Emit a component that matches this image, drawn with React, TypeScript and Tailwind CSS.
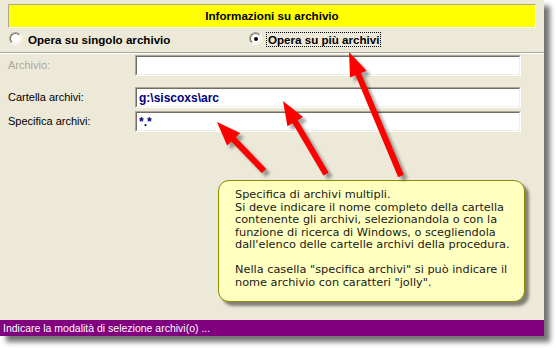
import React from "react";

type P = { x: number; y: number };

function arrowPoly(tip: P, tail: P, headLen = 24, headHalf = 9, shaftHalf = 3): string {
  const dx = tip.x - tail.x;
  const dy = tip.y - tail.y;
  const len = Math.sqrt(dx * dx + dy * dy);
  const ux = dx / len;
  const uy = dy / len;
  const px = -uy;
  const py = ux;
  const bx = tip.x - ux * headLen;
  const by = tip.y - uy * headLen;
  const pts: [number, number][] = [
    [tail.x + px * shaftHalf, tail.y + py * shaftHalf],
    [bx + px * shaftHalf, by + py * shaftHalf],
    [bx + px * headHalf, by + py * headHalf],
    [tip.x, tip.y],
    [bx - px * headHalf, by - py * headHalf],
    [bx - px * shaftHalf, by - py * shaftHalf],
    [tail.x - px * shaftHalf, tail.y - py * shaftHalf],
  ];
  return pts.map((p) => `${p[0].toFixed(1)},${p[1].toFixed(1)}`).join(" ");
}

const arrows: { tip: P; tail: P }[] = [
  { tip: { x: 349, y: 52 }, tail: { x: 401, y: 176 } },
  { tip: { x: 283, y: 101 }, tail: { x: 326, y: 174 } },
  { tip: { x: 217, y: 122 }, tail: { x: 264, y: 171 } },
];

function Radio({ checked }: { checked?: boolean }) {
  return (
    <div className="w-[13px] h-[13px] rounded-full border border-[#ACA899] border-b-white border-r-white shrink-0">
      <div className="w-full h-full rounded-full border border-[#716F64] border-b-[#F1EFE2] border-r-[#F1EFE2] bg-white flex items-center justify-center">
        {checked && <div className="w-[4px] h-[4px] rounded-full bg-black" />}
      </div>
    </div>
  );
}

function Field({ children }: { children?: React.ReactNode }) {
  return (
    <div className="w-[386px] h-[21px] border border-[#ACA899] border-b-white border-r-white">
      <div className="w-full h-full border border-[#716F64] border-b-[#F1EFE2] border-r-[#F1EFE2] bg-white flex items-center pl-[2px] text-[12px] font-bold text-[#000080] leading-none">
        {children}
      </div>
    </div>
  );
}

export default function App() {
  return (
    <div className="w-[556px] h-[348px] bg-white overflow-hidden" style={{ fontFamily: '"Liberation Sans", Arial, sans-serif' }}>
      <div className="relative w-[544px] h-[336px] bg-[#ECE9D8] flex flex-col shadow-[6px_6px_5px_rgba(0,0,0,0.55)]">
        {/* header */}
        <div className="mx-2 mt-1 h-6 border border-[#ACA899] border-b-white border-r-white bg-[#FFFF00] flex items-center justify-center">
          <span className="text-[11.6px] font-bold text-black leading-none">Informazioni su archivio</span>
        </div>

        {/* radio row */}
        <div className="h-[24px] flex items-start pt-[4px] pl-[9px] text-[11.6px] font-bold text-black">
          <div className="w-[240px] flex items-start gap-[5px]">
            <Radio />
            <span className="border border-transparent leading-[13px] pr-[1px]">Opera su singolo archivio</span>
          </div>
          <div className="flex items-start gap-[4px]">
            <Radio checked />
            <span className="border border-dotted border-black leading-[13px] pl-[1px] pr-[1px]">Opera su più archivi</span>
          </div>
        </div>

        {/* separator */}
        <div className="h-[2px] border-t border-[#ACA899] border-b border-b-white" />

        {/* fields */}
        <div className="pt-[1px] pl-2 flex flex-col text-[11px] text-black">
          <div className="flex items-center h-[21px]">
            <span className="w-[127px] text-[#ACA899]">Archivio:</span>
            <Field />
          </div>
          <div className="flex items-center h-[21px] mt-[11px]">
            <span className="w-[127px]">Cartella archivi:</span>
            <Field>g:\siscoxs\arc</Field>
          </div>
          <div className="flex items-center h-[21px] mt-[3px]">
            <span className="w-[127px]">Specifica archivi:</span>
            <Field>
              <span className="self-start pt-[3px]">*.*</span>
            </Field>
          </div>
        </div>

        <div className="flex-1" />

        {/* status bar */}
        <div className="h-4 bg-[#800080] text-white text-[10.5px] leading-4 pl-[3px] whitespace-nowrap">
          Indicare la modalità di selezione archivi(o) ...
        </div>

        {/* tooltip balloon */}
        <div
          className="absolute left-[218px] top-[180px] w-[307px] h-[122px] rounded-[11px] border border-[#8C8C00] bg-[#FFFFC0] shadow-[4px_4px_3px_rgba(0,0,0,0.45)] pl-[16px] pt-[8px] text-[11.3px] leading-[12.5px] text-[#1a1a1a] whitespace-nowrap"
          style={{ fontFamily: '"DejaVu Sans", Verdana, sans-serif' }}
        >
          <div>Specifica di archivi multipli.</div>
          <div>Si deve indicare il nome completo della cartella</div>
          <div>contenente gli archivi, selezionandola o con la</div>
          <div>funzione di ricerca di Windows, o scegliendola</div>
          <div>dall'elenco delle cartelle archivi della procedura.</div>
          <div>&nbsp;</div>
          <div>Nella casella "specifica archivi" si può indicare il</div>
          <div>nome archivio con caratteri "jolly".</div>
        </div>

        {/* arrows */}
        <svg className="absolute left-0 top-0 pointer-events-none" width="544" height="336">
          <defs>
            <filter id="ash" x="-20%" y="-20%" width="140%" height="140%">
              <feGaussianBlur stdDeviation="1.5" />
            </filter>
          </defs>
          {arrows.map((a, i) => (
            <polygon key={`s${i}`} points={arrowPoly(a.tip, a.tail)} transform="translate(4,4)" fill="rgba(0,0,0,0.35)" filter="url(#ash)" />
          ))}
          {arrows.map((a, i) => (
            <polygon key={`a${i}`} points={arrowPoly(a.tip, a.tail)} fill="#FF0000" />
          ))}
        </svg>
      </div>
    </div>
  );
}
